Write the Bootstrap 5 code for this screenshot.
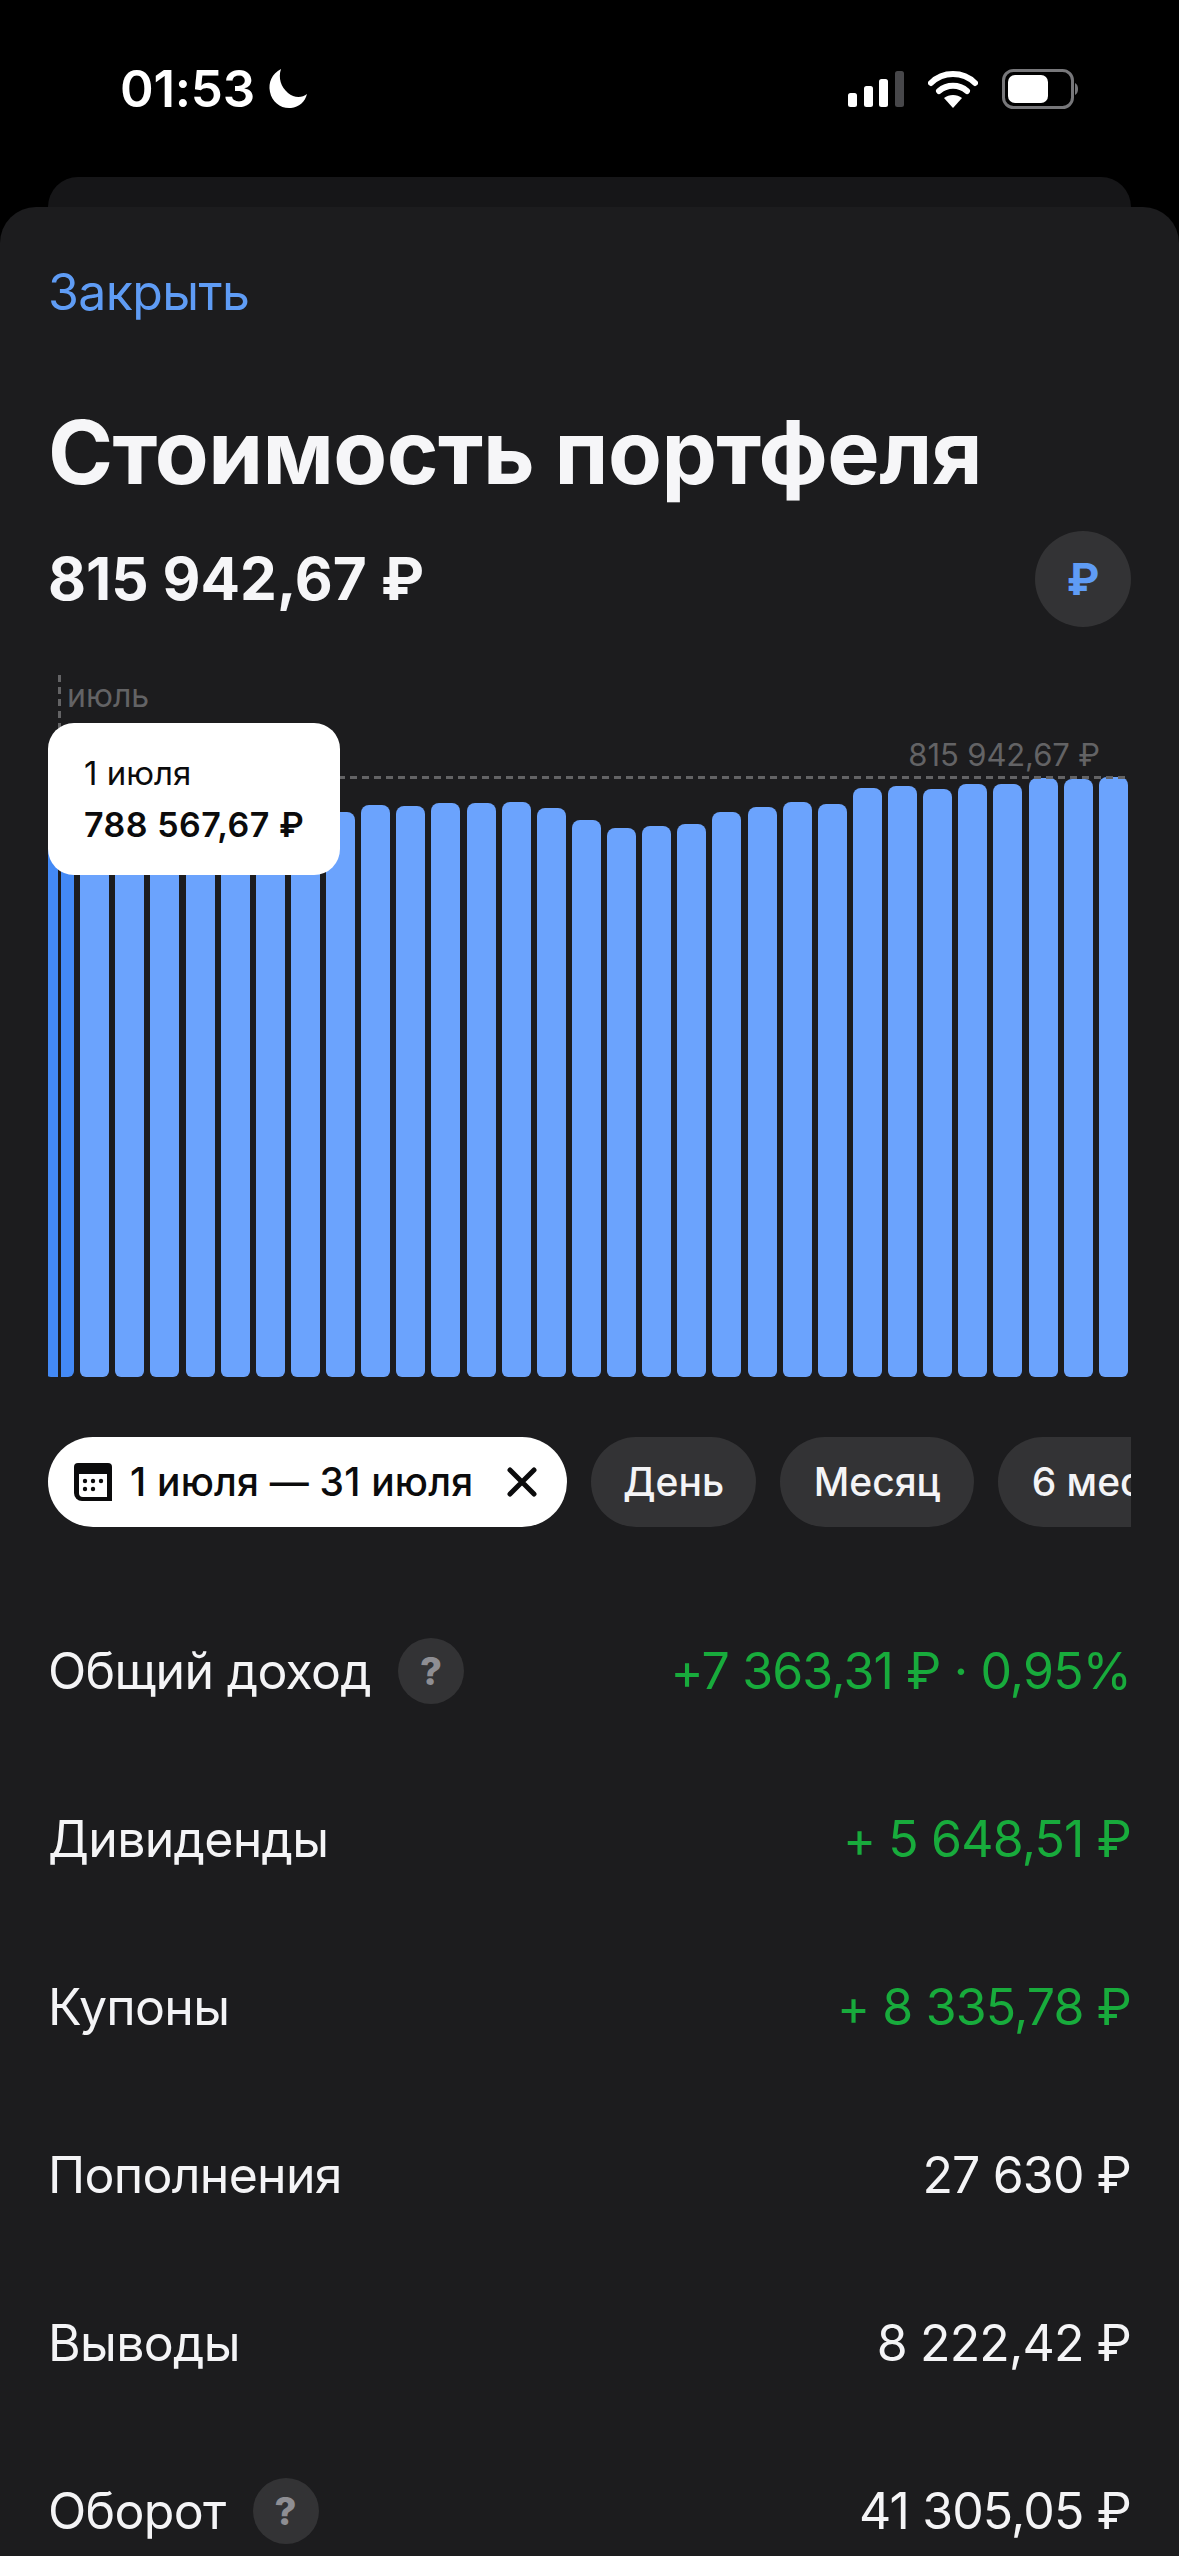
<!DOCTYPE html>
<html lang="ru">
<head>
<meta charset="utf-8">
<title>Стоимость портфеля</title>
<link href="https://cdn.jsdelivr.net/npm/bootstrap@5.3.0/dist/css/bootstrap.min.css" rel="stylesheet">
<style>
html,body{background:#000;margin:0;height:2556px;overflow:hidden}
body{font-family:"Inter","Liberation Sans",sans-serif;color:#f4f4f6}
.status-strip{height:177px;padding:0 101px 0 120px}
.clock{font-size:51px;font-weight:600;letter-spacing:-.2px;line-height:1;color:#fff}
.moon-ico{width:42px;height:42px;margin-left:12px}
.back-sheet{height:30px;margin:0 48px;background:#161618;border-radius:30px 30px 0 0}
.front-sheet{background:#1c1c1e;border-radius:36px 36px 0 0;padding:55px 48px 0;height:2349px}
.close-link{display:block;font-size:50px;line-height:60px;color:#5f9cf5;text-decoration:none;letter-spacing:-.6px}
.page-title{font-size:88px;font-weight:700;line-height:100px;margin:80px 0 0;color:#f6f6f8;letter-spacing:-.55px}
.sum-row{margin-top:29px;height:96px}
.sum-text{font-size:58.5px;font-weight:700;line-height:1;color:#f6f6f8}
.cur-btn{width:96px;height:96px;background:#333335;color:#5f9cf5;font-size:44px;font-weight:700;border:0;padding:0}
.chart-box{position:relative;height:717px;margin-top:33px;overflow:hidden}
.bars{position:absolute;left:-3px;right:3px;bottom:0;height:600px}
.bar-item{width:29px;background:#6ba3fd;border-radius:8px 8px 6px 6px}
.bar-item.active-bar{background:#4389f5}
.v-dash{position:absolute;left:10px;top:0;width:3px;height:717px;background:#1c1c1e}
.v-dash-top{position:absolute;left:10px;top:15px;height:55px;width:3px;background:repeating-linear-gradient(180deg,#636365 0 7px,transparent 7px 12px)}
.h-dash{position:absolute;left:290px;right:3px;top:116px;height:3px;background:repeating-linear-gradient(90deg,#636365 0 7px,transparent 7px 12px)}
.month-tag{position:absolute;left:19px;top:16px;font-size:32px;line-height:40px;color:#636365}
.max-tag{position:absolute;right:31px;top:75px;font-size:31px;line-height:40px;color:#636365;letter-spacing:-.1px}
.tip-card{position:absolute;left:0;top:63px;width:292px;height:152px;background:#fff;border-radius:26px;padding:27px 0 0 36px;color:#0b0b0c}
.tip-date{font-size:33px;line-height:46px}
.tip-val{font-size:34px;font-weight:600;line-height:46px;margin-top:6px;letter-spacing:.5px}
.pills-row{margin-top:60px;height:90px;overflow:hidden}
.pill-item{height:90px;flex:0 0 auto;background:#333335;color:#f4f4f6;font-size:39px;font-weight:500;padding:0 32px;border:0;white-space:nowrap}
.pill-item.pill-wide{padding:0 33.5px}
.pill-item.on{background:#fff;color:#0b0b0c;padding:0 30px 0 25px;width:519px;letter-spacing:.2px}
.pill-item.on .cal-ico{width:40px;height:40px;margin-right:17px}
.pill-item.on .x-ico{width:30px;height:30px;margin-left:auto}
.stat-rows{margin-top:60px}
.stat-line{height:168px;font-size:50px;line-height:1;letter-spacing:-.7px}
.stat-plus{color:#18ab3c}
.stat-val{letter-spacing:-.85px}
.hint-dot{width:66px;height:66px;margin-left:27px;background:#333335;color:#8e8e93;font-size:38px;font-weight:800;letter-spacing:0}
</style>
</head>
<body>
<div class="status-strip d-flex align-items-center justify-content-between">
  <div class="d-flex align-items-center">
    <span class="clock">01:53</span>
    <svg class="moon-ico" viewBox="0 0 42 42"><path d="M14 1C5 6 1 14 3 24c2 10 11 17 21 16 8-1 14-6 16-14-5 4-13 4-19-1C14 19 11 10 14 1Z" fill="#fff"/></svg>
  </div>
  <div class="d-flex align-items-center">
    <svg width="56" height="36" viewBox="0 0 56 36"><rect x="0" y="22" width="9" height="14" rx="2.5" fill="#fff"/><rect x="16" y="15" width="9" height="21" rx="2.5" fill="#fff"/><rect x="31" y="8" width="9" height="28" rx="2.5" fill="#fff"/><rect x="47" y="0" width="9" height="36" rx="2.5" fill="#47474a"/></svg>
    <svg class="ms-4" width="50" height="38" viewBox="0 0 50 38"><path d="M3 13C15 1 35 1 47 13" fill="none" stroke="#fff" stroke-width="6" stroke-linecap="round"/><path d="M11 21c8-7 20-7 28 0" fill="none" stroke="#fff" stroke-width="6" stroke-linecap="round"/><path d="M16 28c5-4 13-4 18 0L25 38Z" fill="#fff"/></svg>
    <svg class="ms-4" width="76" height="40" viewBox="0 0 76 40"><rect x="1.5" y="1.5" width="69" height="37" rx="10" fill="none" stroke="#77777a" stroke-width="3"/><rect x="6" y="6" width="40" height="28" rx="7" fill="#fff"/><path d="M73 14c2 1 3 3 3 6s-1 5-3 6Z" fill="#77777a"/></svg>
  </div>
</div>
<div class="back-sheet"></div>
<div class="front-sheet">
  <a class="close-link" href="#">Закрыть</a>
  <h1 class="page-title">Стоимость портфеля</h1>
  <div class="sum-row d-flex align-items-center justify-content-between">
    <span class="sum-text">815 942,67 ₽</span>
    <button class="cur-btn rounded-circle d-flex align-items-center justify-content-center" type="button">₽</button>
  </div>
  <div class="chart-box">
    <div class="bars d-flex align-items-end justify-content-between" id="bars"></div>
    <div class="v-dash"></div>
    <div class="v-dash-top"></div>
    <div class="h-dash"></div>
    <span class="month-tag">июль</span>
    <span class="max-tag">815 942,67 ₽</span>
    <div class="tip-card">
      <div class="tip-date">1 июля</div>
      <div class="tip-val">788 567,67 ₽</div>
    </div>
  </div>
  <div class="pills-row d-flex gap-4 align-items-center">
    <div class="pill-item on rounded-pill d-flex align-items-center">
      <svg class="cal-ico" viewBox="0 0 40 40"><path d="M5 1h30a4 4 0 0 1 4 4v34H9a8 8 0 0 1-8-8V5a4 4 0 0 1 4-4Z" fill="#0b0b0c"/><path d="M6 12h28v23H10a4 4 0 0 1-4-4Z" fill="#fff"/><circle cx="20" cy="19" r="2.2" fill="#0b0b0c"/><circle cx="28" cy="19" r="2.2" fill="#0b0b0c"/><circle cx="12" cy="27" r="2.2" fill="#0b0b0c"/><circle cx="20" cy="27" r="2.2" fill="#0b0b0c"/><circle cx="12" cy="19" r="2.2" fill="#0b0b0c"/></svg>
      <span>1 июля — 31 июля</span>
      <svg class="x-ico" viewBox="0 0 30 30"><path d="M3 3l24 24M27 3L3 27" stroke="#0b0b0c" stroke-width="5" stroke-linecap="round"/></svg>
    </div>
    <div class="pill-item rounded-pill d-flex align-items-center">День</div>
    <div class="pill-item pill-wide rounded-pill d-flex align-items-center">Месяц</div>
    <div class="pill-item pill-wide rounded-pill d-flex align-items-center">6 месяцев</div>
  </div>
  <div class="stat-rows">
    <div class="stat-line d-flex align-items-center justify-content-between"><span class="d-flex align-items-center">Общий доход<span class="hint-dot rounded-circle d-flex align-items-center justify-content-center">?</span></span><span class="stat-plus stat-val">+7 363,31 ₽ · 0,95%</span></div>
    <div class="stat-line d-flex align-items-center justify-content-between"><span>Дивиденды</span><span class="stat-plus stat-val">+ 5 648,51 ₽</span></div>
    <div class="stat-line d-flex align-items-center justify-content-between"><span>Купоны</span><span class="stat-plus stat-val">+ 8 335,78 ₽</span></div>
    <div class="stat-line d-flex align-items-center justify-content-between"><span>Пополнения</span><span class="stat-val">27 630 ₽</span></div>
    <div class="stat-line d-flex align-items-center justify-content-between"><span>Выводы</span><span class="stat-val">8 222,42 ₽</span></div>
    <div class="stat-line d-flex align-items-center justify-content-between"><span class="d-flex align-items-center">Оборот<span class="hint-dot rounded-circle d-flex align-items-center justify-content-center">?</span></span><span class="stat-val">41 305,05 ₽</span></div>
  </div>
</div>
<script>
var tops=[830,826,824,822,820,820,818,815,812,805,805.5,803,803,802,808,820,828,826,824,812,807,802,804,788,786,789,784,784,778,779,777];
var box=document.getElementById('bars');
tops.forEach(function(t,i){var d=document.createElement('div');d.className='bar-item'+(i===0?' active-bar':'');d.style.height=(1377-t)+'px';box.appendChild(d);});
</script>
<script src="https://cdn.jsdelivr.net/npm/bootstrap@5.3.0/dist/js/bootstrap.bundle.min.js"></script>
</body>
</html>
